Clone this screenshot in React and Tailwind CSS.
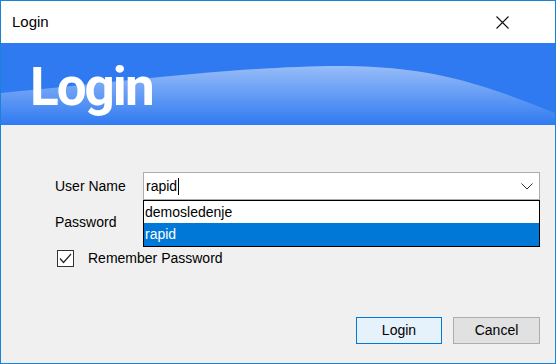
import React from "react";

const font = { fontFamily: "'Liberation Sans', Arial, sans-serif" };

const Chevron = () => (
  <svg width="12" height="7" viewBox="0 0 12 7" className="block">
    <polyline points="0.5,0.5 6,6 11.5,0.5" fill="none" stroke="#333" strokeWidth="1" />
  </svg>
);

const Wave = () => (
  <svg className="absolute inset-0" width="554" height="82" viewBox="0 0 554 82" preserveAspectRatio="none">
    <defs>
      <linearGradient id="wv" x1="0" y1="0" x2="0" y2="1">
        <stop offset="0" stopColor="#ffffff" stopOpacity="0.5" />
        <stop offset="1" stopColor="#ffffff" stopOpacity="0" />
      </linearGradient>
    </defs>
    <path d="M0,50 C110,40 250,22 345,23 C430,24 480,40 554,70 L554,82 L0,82 Z" fill="url(#wv)" />
  </svg>
);

export default function App() {
  return (
    <div className="w-[556px] h-[364px] border border-[#1883d7] flex flex-col bg-[#f0f0f0]" style={font}>
      {/* title bar */}
      <div className="h-[42px] bg-white flex items-center justify-between pl-[11px] pr-[46px] shrink-0">
        <span className="text-[15px] text-black">Login</span>
        <svg width="13" height="13" viewBox="0 0 13 13">
          <path d="M0.5,0.5 L12.5,12.5 M12.5,0.5 L0.5,12.5" stroke="#111" strokeWidth="1.1" />
        </svg>
      </div>

      {/* banner */}
      <div className="relative h-[82px] bg-[#307af1] shrink-0 overflow-hidden">
        <Wave />
        <div className="relative pl-[29px] pt-[18px] text-white font-bold text-[53px] leading-none tracking-[-2px]"
          style={{ fontFamily: "Roboto, 'Liberation Sans', sans-serif" }}>
          Login
        </div>
      </div>

      {/* body */}
      <div className="flex-1 flex flex-col pt-[47px] pl-[54px] pr-[15px] pb-[19px] text-[14px] text-black">
        <div className="flex items-center">
          <span className="w-[88px]">User Name</span>
          <div className="relative flex-1">
            <div className="h-[28px] bg-white border border-[#adadad] flex items-center justify-between pl-[2px] pr-[6px]">
              <span className="flex items-center">rapid<span className="w-px h-[17px] bg-black ml-[1px]" /></span>
              <Chevron />
            </div>
            <div className="absolute left-0 right-0 top-full z-10 bg-white border border-black">
              <div className="h-[22px] flex items-center pl-[1px]">demosledenje</div>
              <div className="h-[23px] flex items-center pl-[1px] bg-[#0078d7] text-white">rapid</div>
            </div>
          </div>
        </div>

        <div className="flex items-center mt-[8px]">
          <span className="w-[88px]">Password</span>
          <div className="flex-1 h-[28px] bg-white border border-[#adadad]" />
        </div>

        <div className="flex items-center mt-[12px] pl-[2px]">
          <div className="w-[17px] h-[17px] border border-[#333] bg-white flex items-center justify-center">
            <svg width="13" height="11" viewBox="0 0 13 11">
              <polyline points="1,5.5 4.5,9.5 12,1" fill="none" stroke="#222" strokeWidth="1.2" />
            </svg>
          </div>
          <span className="ml-[14px]">Remember Password</span>
        </div>

        <div className="mt-auto flex justify-end gap-[11px]">
          <button className="w-[86px] h-[27px] border border-[#0078d7] bg-[#e5f1fb] text-[14px]">Login</button>
          <button className="w-[87px] h-[27px] border border-[#adadad] bg-[#e1e1e1] text-[14px]">Cancel</button>
        </div>
      </div>
    </div>
  );
}
